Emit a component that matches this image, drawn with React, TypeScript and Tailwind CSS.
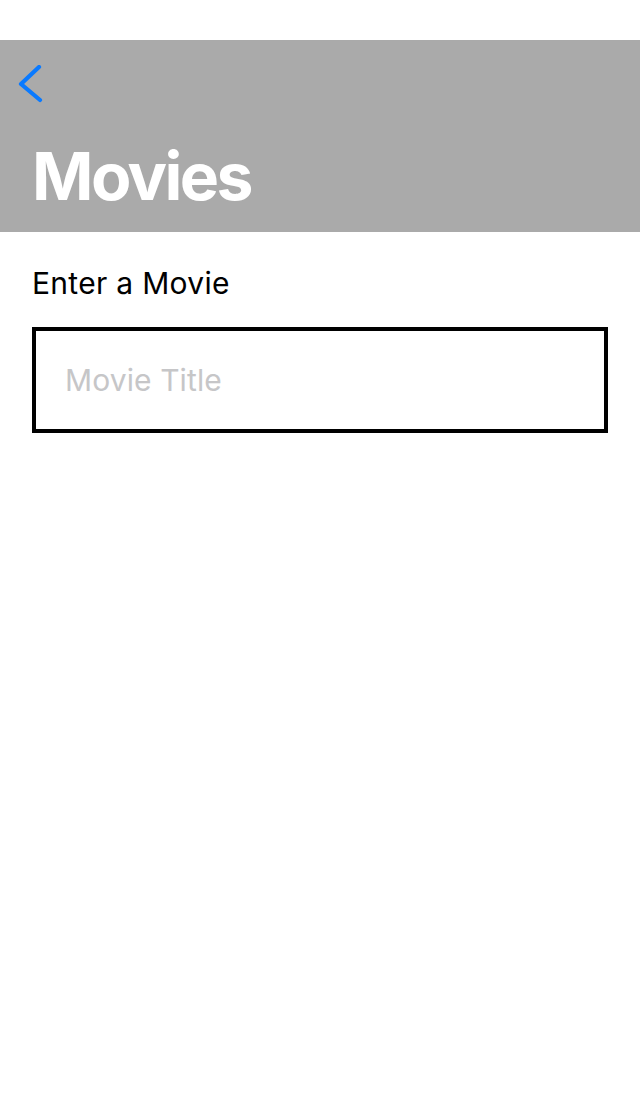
import React from "react";

export default function App() {
  return (
    <div className="w-[640px] h-[1096px] bg-white flex flex-col" style={{ fontFamily: "Inter, 'Liberation Sans', sans-serif" }}>
      <div className="h-[40px] bg-white" />
      <div className="h-[192px] bg-[#aaaaaa] flex flex-col">
        <div className="h-[96px] pl-[17px] pt-[25px]">
          <svg width="28" height="40" viewBox="0 0 28 40" fill="none">
            <path d="M22 2 L4 19 L23 35" stroke="#0a7aff" strokeWidth="4.2" strokeLinecap="round" strokeLinejoin="round" />
          </svg>
        </div>
        <div className="pl-[32px] text-white font-bold text-[66px] leading-[80px] tracking-[-2.6px]">Movies</div>
      </div>
      <div className="px-[32px] pt-[33px]">
        <div className="text-black text-[30px] leading-[36px] tracking-[0.3px]">Enter a Movie</div>
        <div className="mt-[26px] w-[576px] h-[106px] border-[4px] border-black flex items-center pl-[29px]">
          <span className="text-[#c6c6c8] text-[30px] leading-[36px] tracking-[0.1px]">Movie Title</span>
        </div>
      </div>
    </div>
  );
}
